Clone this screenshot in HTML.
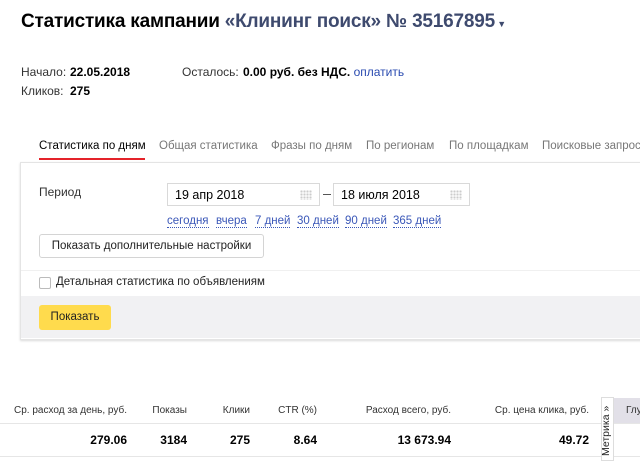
<!DOCTYPE html>
<html><head><meta charset="utf-8"><style>
body{margin:0;width:640px;height:469px;overflow:hidden;background:#fff;font-family:"Liberation Sans","DejaVu Sans",sans-serif;color:#000;position:relative}
.a{position:absolute;white-space:nowrap}
.s{font-size:12px}
.l{color:#2a4bb0}
.dl{color:#3a57b8;border-bottom:1px dotted #3a57b8;font-size:11.5px;line-height:13px}
.inp{position:absolute;height:23px;border:1px solid #d9d9d9;background:#fff;font-size:12.5px;line-height:23px;padding-left:7px;box-sizing:border-box}
.grid{position:absolute;right:7px;top:6px;width:12px;height:10px;background:radial-gradient(circle,#ccc 1px,transparent 1.3px) 0 0/3px 3px}
</style></head><body>
<div class="a" style="left:21px;top:11px;font-size:19px;font-weight:bold;letter-spacing:-0.2px">Статистика кампании <span style="color:#3e4a6e">«Клининг поиск» № 35167895</span><span style="font-size:9px;color:#3e4a6e"> ▼</span></div>
<div class="a s" style="left:21px;top:65px;color:#333">Начало:</div>
<div class="a s" style="left:70px;top:65px;font-weight:bold">22.05.2018</div>
<div class="a s" style="left:21px;top:84px;color:#333">Кликов:</div>
<div class="a s" style="left:70px;top:84px;font-weight:bold">275</div>
<div class="a s" style="left:182px;top:65px;color:#333">Осталось:</div>
<div class="a s" style="left:243px;top:65px"><b>0.00 руб. без НДС.</b> <span class="l">оплатить</span></div>

<div class="a" style="left:39px;top:140px;font-size:11.5px;color:#000">Статистика по дням</div>
<div class="a" style="left:39px;top:158px;width:106px;height:2px;background:#e4232a"></div>
<div class="a" style="left:159px;top:140px;font-size:11.5px;color:#777">Общая статистика</div>
<div class="a" style="left:271px;top:140px;font-size:11.5px;color:#777">Фразы по дням</div>
<div class="a" style="left:366px;top:140px;font-size:11.5px;color:#777">По регионам</div>
<div class="a" style="left:449px;top:140px;font-size:11.5px;color:#777">По площадкам</div>
<div class="a" style="left:542px;top:140px;font-size:11.5px;color:#777">Поисковые запросы</div>

<div class="a" style="left:20px;top:162px;width:640px;height:176px;border:1px solid #e4e4e4;box-shadow:0 1px 2px rgba(0,0,0,.15);background:#fff"></div>
<div class="a s" style="left:39px;top:185px;color:#333">Период</div>
<div class="inp" style="left:167px;top:183px;width:153px">19 апр 2018<div class="grid"></div></div>
<div class="a" style="left:323px;top:194px;width:8px;height:1px;background:#555"></div>
<div class="inp" style="left:333px;top:183px;width:137px">18 июля 2018<div class="grid"></div></div>
<div class="a" style="left:167px;top:211px"><span class="dl">сегодня</span></div>
<div class="a" style="left:216px;top:211px"><span class="dl">вчера</span></div>
<div class="a" style="left:255px;top:211px"><span class="dl">7 дней</span></div>
<div class="a" style="left:297px;top:211px"><span class="dl">30 дней</span></div>
<div class="a" style="left:345px;top:211px"><span class="dl">90 дней</span></div>
<div class="a" style="left:393px;top:211px"><span class="dl">365 дней</span></div>
<div class="a" style="left:39px;top:234px;width:225px;height:24px;border:1px solid #d4d4d4;border-radius:3px;box-sizing:border-box;line-height:22px;text-align:center;color:#222;font-size:11.5px">Показать дополнительные настройки</div>
<div class="a" style="left:21px;top:270px;width:619px;height:1px;background:#f0f0f0"></div>
<div class="a" style="left:39px;top:277px;width:12px;height:12px;border:1px solid #bbb;border-radius:2px;box-sizing:border-box"></div>
<div class="a" style="left:56px;top:276px;color:#222;font-size:11.5px">Детальная статистика по объявлениям</div>
<div class="a" style="left:21px;top:296px;width:619px;height:42px;background:#f1f1f3"></div>
<div class="a" style="left:39px;top:305px;width:72px;height:25px;background:#ffdb4d;border-radius:3px;text-align:center;line-height:25px;color:#222;font-size:11.5px">Показать</div>

<div class="a" style="left:0;top:405px;font-size:10px;color:#333;width:640px">
<span class="a" style="right:513px">Ср. расход за день, руб.</span>
<span class="a" style="right:453px">Показы</span>
<span class="a" style="right:390px">Клики</span>
<span class="a" style="right:323px">CTR (%)</span>
<span class="a" style="right:189px">Расход всего, руб.</span>
<span class="a" style="right:51px">Ср. цена клика, руб.</span>
</div>
<div class="a" style="left:0;top:423px;width:640px;height:1px;background:#e6e6e6"></div>
<div class="a" style="left:0;top:433px;font-size:12px;font-weight:bold;width:640px">
<span class="a" style="right:513px">279.06</span>
<span class="a" style="right:453px">3184</span>
<span class="a" style="right:390px">275</span>
<span class="a" style="right:323px">8.64</span>
<span class="a" style="right:189px">13 673.94</span>
<span class="a" style="right:51px">49.72</span>
</div>
<div class="a" style="left:0;top:456px;width:640px;height:1px;background:#e6e6e6"></div>
<div class="a" style="left:614px;top:398px;width:26px;height:25px;background:#e2e0e8"></div>
<div class="a" style="left:626px;top:405px;font-size:10px;color:#333">Глу</div>
<div class="a" style="left:601px;top:397px;width:13px;height:64px;background:#fff;border:1px solid #ddd;box-sizing:border-box"></div>
<div class="a" style="left:600px;top:456px;transform:rotate(-90deg);transform-origin:0 0;font-size:10.5px;color:#222">Метрика »</div>
</body></html>
